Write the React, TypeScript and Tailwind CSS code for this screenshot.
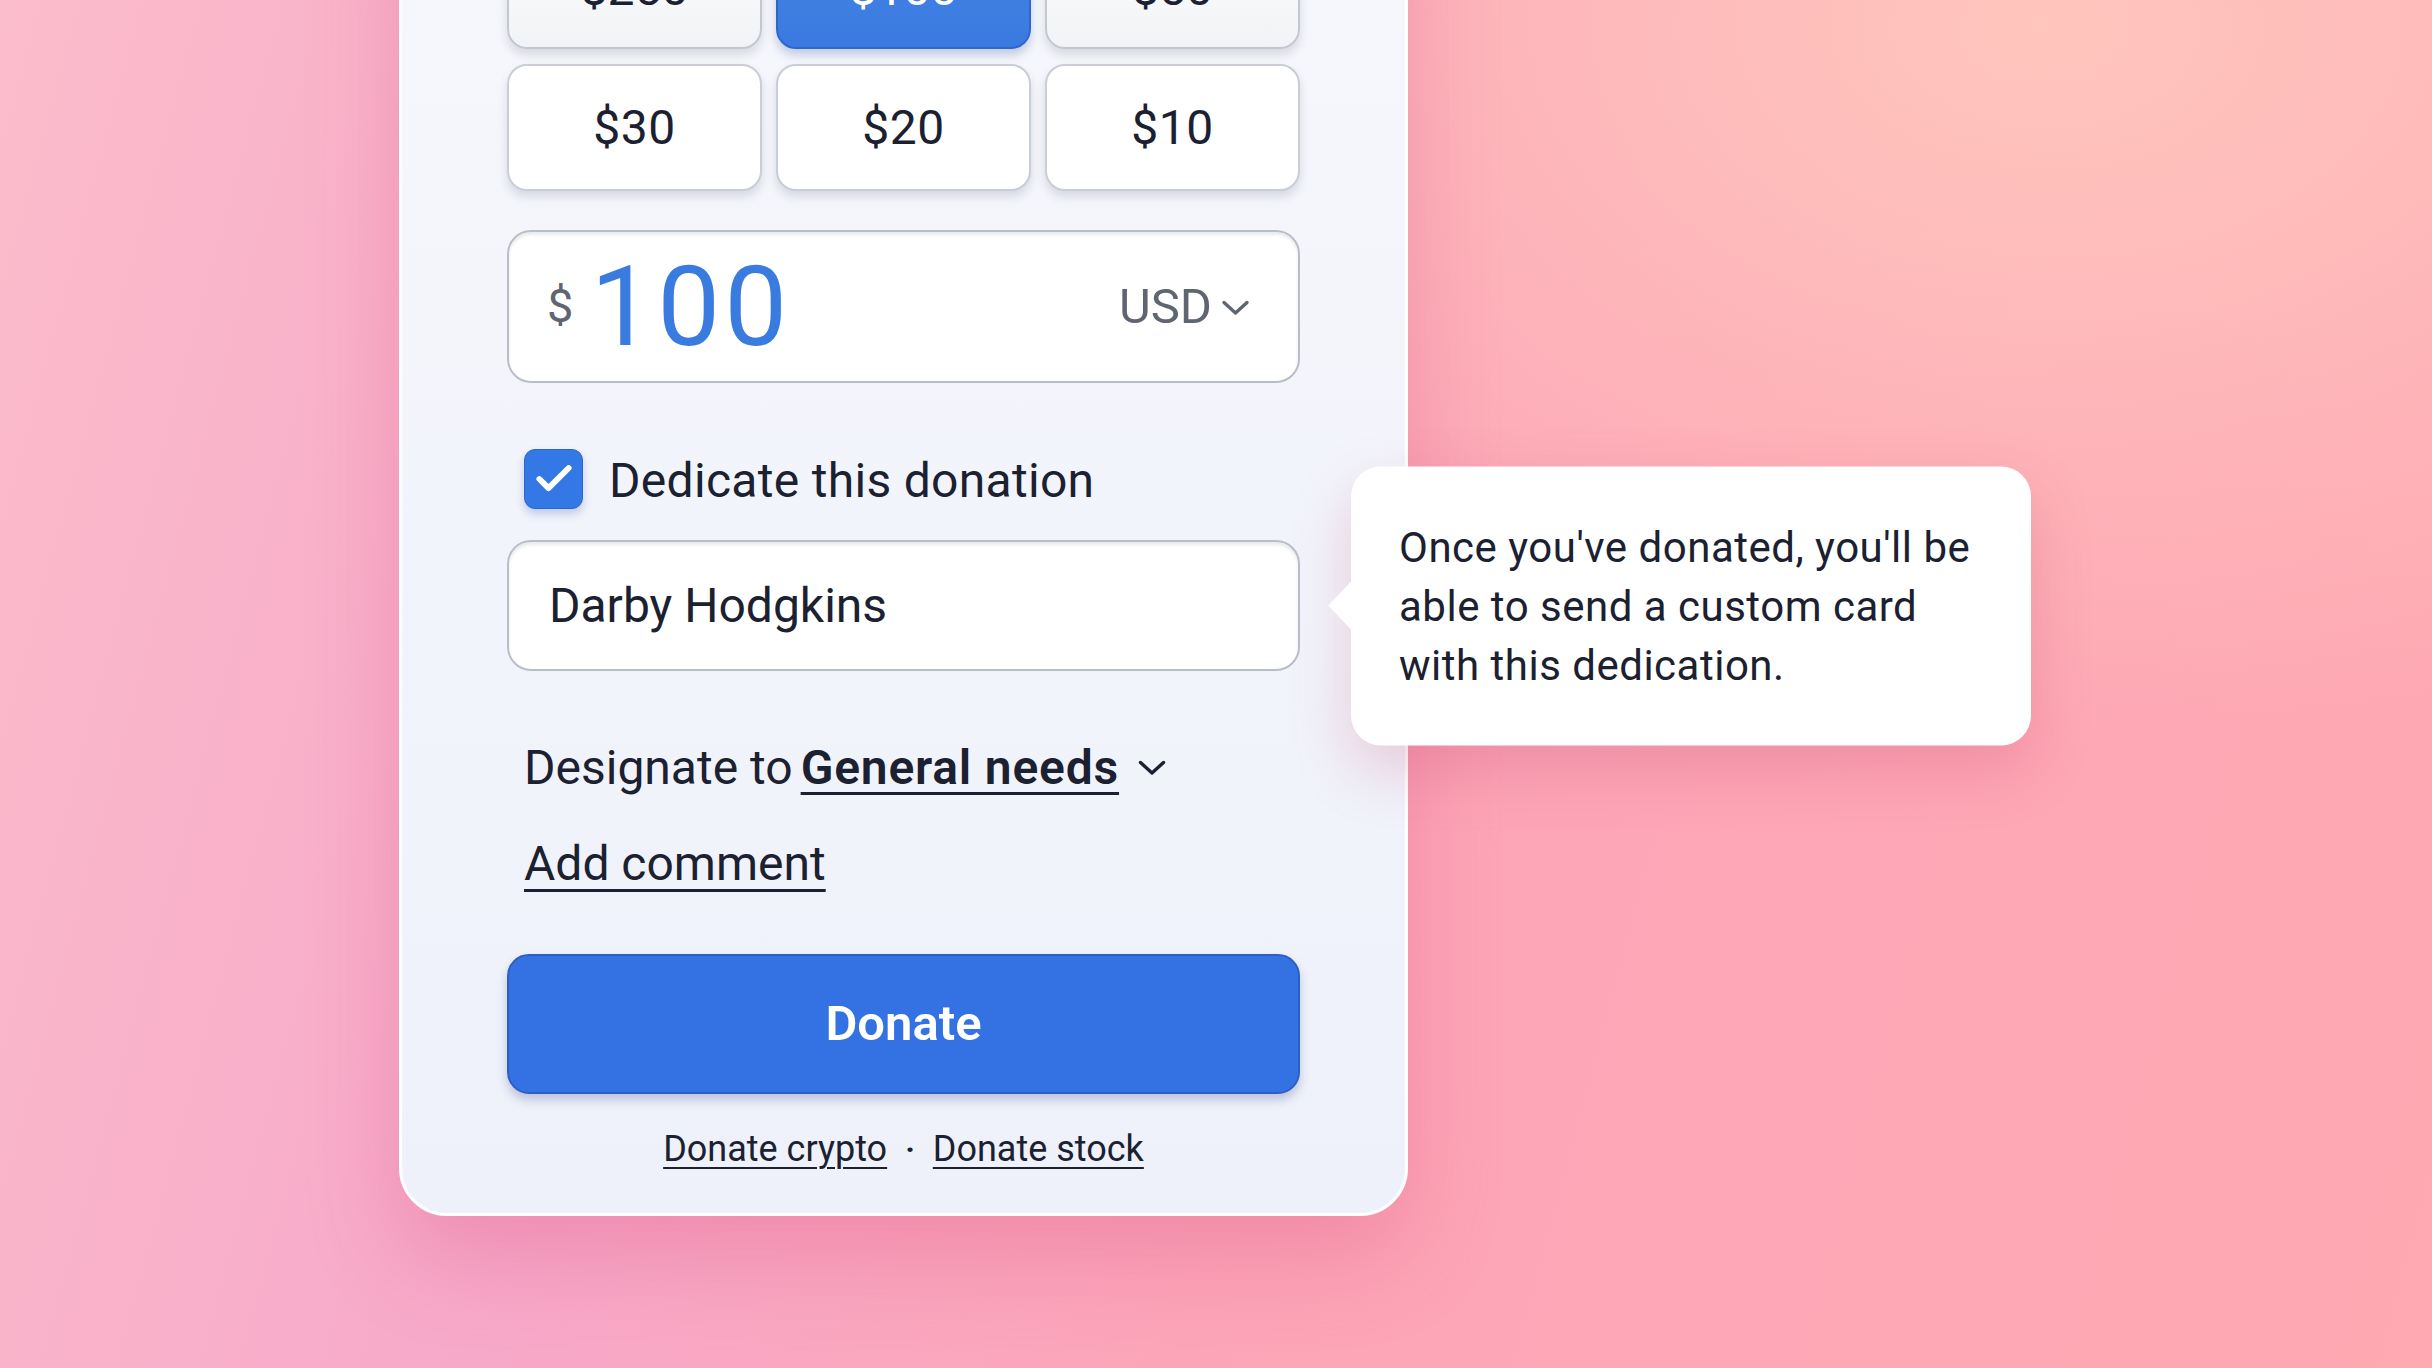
import { Check } from "lucide-react";

const amounts = [
  { label: "$250", selected: false, top: true },
  { label: "$100", selected: true, top: true },
  { label: "$50", selected: false, top: true },
  { label: "$30", selected: false, top: false },
  { label: "$20", selected: false, top: false },
  { label: "$10", selected: false, top: false },
];

function Chevron({ className }: { className?: string }) {
  return (
    <svg viewBox="0 0 28 16" className={className} fill="none">
      <path d="M2.5 2.5 L14 13 L25.5 2.5" stroke="currentColor" strokeWidth="3.4" strokeLinecap="round" strokeLinejoin="round" />
    </svg>
  );
}

export default function App() {
  return (
    <div
      className="relative w-[2432px] h-[1368px] overflow-hidden bg-[radial-gradient(ellipse_at_84%_2%,#ffc6bd_0%,rgba(255,198,189,0)_38%),linear-gradient(105deg,#fbbccb_0%,#f7a9c9_30%,#fca5b8_55%,#ffa9b3_100%)] text-[#1b2130]"
      style={{ fontFamily: "Roboto, 'Noto Sans', 'Liberation Sans', sans-serif" }}
    >
      <div className="flex pl-[399px]">
        {/* Donation card */}
        <div className="w-[1009px] -mt-[138px] pt-[57px] pb-[42px] px-[105px] rounded-[48px] border-[3px] border-white bg-[linear-gradient(180deg,#f7f8fc_0%,#f2f4fb_50%,#eef1fa_100%)] shadow-[0_40px_90px_rgba(214,70,120,0.28)]">
          {/* Amount presets */}
          <div className="grid grid-cols-3 gap-x-[14px] gap-y-[15px]">
            {amounts.map((a) => (
              <button
                key={a.label}
                className={
                  a.selected
                    ? "h-[127px] pt-[6px] rounded-[20px] border-2 border-[#2f66cc] bg-[linear-gradient(180deg,#4886e4_0%,#3a79e0_100%)] text-white text-[48px] shadow-[0_6px_10px_rgba(40,70,140,0.25)]"
                    : a.top
                    ? "h-[127px] pt-[6px] rounded-[20px] border-2 border-[#c3c8d0] bg-[linear-gradient(180deg,#ffffff_0%,#f2f3f6_100%)] text-[48px] shadow-[0_6px_10px_rgba(60,70,100,0.16)]"
                    : "h-[127px] rounded-[20px] border-2 border-[#c9cdd5] bg-white text-[48px] tracking-[0.5px] shadow-[0_6px_10px_rgba(60,70,100,0.16)]"
                }
              >
                {a.label}
              </button>
            ))}
          </div>

          {/* Amount input */}
          <div className="mt-[39px] h-[153px] rounded-[24px] border-2 border-[#b8bec8] bg-white shadow-[inset_0_3px_3px_rgba(80,90,110,0.12)] flex items-center pl-[38px] pr-[48px]">
            <span className="text-[47px] text-[#5f6672]">$</span>
            <span className="ml-[17px] text-[112px] leading-none text-[#3a7be0] tracking-[4px]">100</span>
            <div className="ml-auto flex items-center gap-[9px] text-[#5f6672]">
              <span className="text-[49px]">USD</span>
              <Chevron className="w-[29px] h-[16px] mt-[2px]" />
            </div>
          </div>

          {/* Dedicate checkbox */}
          <div className="mt-[66px] h-[60px] flex items-center pl-[17px]">
            <div className="w-[59px] h-[60px] rounded-[11px] bg-[#3478e5] border border-[#2c68cf] shadow-[0_5px_8px_rgba(40,80,170,0.25)] flex items-center justify-center">
              <Check className="w-[44px] h-[44px] text-white" strokeWidth={3.2} />
            </div>
            <span className="ml-[26px] mt-[4px] text-[48px] tracking-[0.3px]">Dedicate this donation</span>
          </div>

          {/* Name input with tooltip */}
          <div className="relative mt-[31px]">
            <div className="h-[131px] rounded-[24px] border-2 border-[#b8bec8] bg-white shadow-[inset_0_3px_3px_rgba(80,90,110,0.12)] flex items-center pl-[40px]">
              <span className="text-[48px]">Darby Hodgkins</span>
            </div>
            <div className="absolute left-[calc(100%+51px)] top-1/2 -translate-y-1/2 w-[680px] rounded-[30px] bg-white px-[48px] py-[51px] shadow-[0_24px_60px_rgba(190,60,100,0.22)]">
              <div className="absolute -left-[23px] top-1/2 -translate-y-1/2 w-0 h-0 border-y-[25px] border-y-transparent border-r-[24px] border-r-white" />
              <p className="text-[42px] leading-[59px] tracking-[0.5px] whitespace-nowrap">
                Once you've donated, you'll be
                <br />
                able to send a custom card
                <br />
                with this dedication.
              </p>
            </div>
          </div>

          {/* Designation */}
          <div className="mt-[67px] h-[60px] flex items-center pl-[17px] text-[48px]">
            <span>Designate to</span>
            <span className="ml-[8px] font-semibold tracking-[0.8px] underline decoration-[3px] underline-offset-[8px]">General needs</span>
            <Chevron className="ml-[19px] w-[28px] h-[16px] text-[#1b2130]" />
          </div>

          <div className="mt-[36px] h-[60px] flex items-center pl-[17px]">
            <a className="text-[48px] underline decoration-[3px] underline-offset-[9px]">Add comment</a>
          </div>

          {/* Donate button */}
          <button className="mt-[60px] w-full h-[140px] rounded-[22px] border-2 border-[#2c5fc6] bg-[#3472e3] text-white text-[49px] font-semibold shadow-[0_6px_10px_rgba(40,60,130,0.25)]">
            Donate
          </button>

          <div className="mt-[33px] h-[44px] flex items-center justify-center gap-[18px] text-[36px]">
            <a className="underline decoration-2 underline-offset-[6px]">Donate crypto</a>
            <span className="text-[32px] font-bold">·</span>
            <a className="underline decoration-2 underline-offset-[6px]">Donate stock</a>
          </div>
        </div>
      </div>
    </div>
  );
}
